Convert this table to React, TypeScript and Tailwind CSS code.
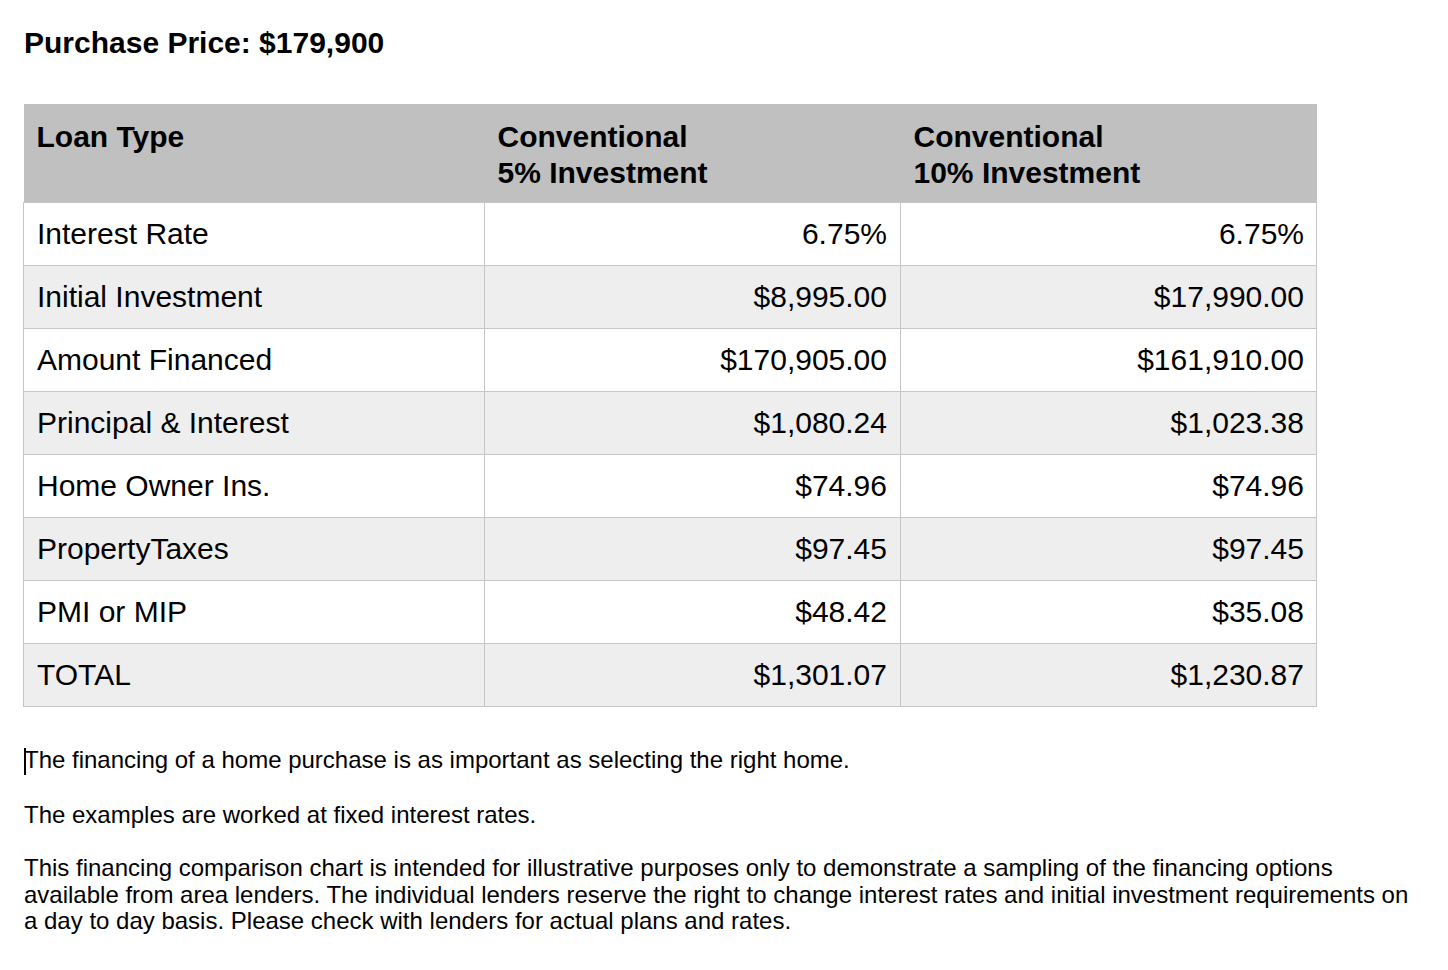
import React from 'react';

type Row = { label: string; five: string; ten: string };

const rows: Row[] = [
  { label: 'Interest Rate', five: '6.75%', ten: '6.75%' },
  { label: 'Initial Investment', five: '$8,995.00', ten: '$17,990.00' },
  { label: 'Amount Financed', five: '$170,905.00', ten: '$161,910.00' },
  { label: 'Principal & Interest', five: '$1,080.24', ten: '$1,023.38' },
  { label: 'Home Owner Ins.', five: '$74.96', ten: '$74.96' },
  { label: 'PropertyTaxes', five: '$97.45', ten: '$97.45' },
  { label: 'PMI or MIP', five: '$48.42', ten: '$35.08' },
  { label: 'TOTAL', five: '$1,301.07', ten: '$1,230.87' },
];

export default function App() {
  return (
    <div className="min-h-screen bg-white text-black font-['Liberation_Sans',Arial,sans-serif] pl-[23px] pr-[24px] pt-[25px]">
      <h1 className="ml-px text-[30px] leading-[36px] font-bold">Purchase Price: $179,900</h1>

      {/* Financing comparison table */}
      <table className="mt-[43px] w-[1293px] border-collapse table-fixed">
        <colgroup>
          <col className="w-[461px]" />
          <col className="w-[416px]" />
          <col className="w-[416px]" />
        </colgroup>
        <thead>
          <tr className="bg-[#bfc0bf] border-b border-[#8e8e8e]">
            <th className="h-[98px] align-top text-left font-bold text-[30px] leading-[36px] pl-[13px] pt-[15px]">
              Loan Type
            </th>
            <th className="align-top text-left font-bold text-[30px] leading-[36px] pl-[13px] pt-[15px]">
              Conventional
              <br />
              5% Investment
            </th>
            <th className="align-top text-left font-bold text-[30px] leading-[36px] pl-[13px] pt-[15px]">
              Conventional
              <br />
              10% Investment
            </th>
          </tr>
        </thead>
        <tbody>
          {rows.map((r, i) => (
            <tr key={r.label} className={i % 2 === 1 ? 'bg-[#eeeeee]' : 'bg-white'}>
              <td className="h-[63px] border border-[#c6c6c6] pl-[13px] pt-[1px] text-[30px] leading-[36px]">{r.label}</td>
              <td className="border border-[#c6c6c6] pr-[13px] pt-[1px] text-right text-[30px] leading-[36px]">{r.five}</td>
              <td className="border border-[#c6c6c6] pr-[12px] pt-[1px] text-right text-[30px] leading-[36px]">{r.ten}</td>
            </tr>
          ))}
        </tbody>
      </table>

      {/* Notes */}
      <div className="mt-[40px] ml-px text-[24px] leading-[26.5px] max-w-[1400px]">
        <p>
          <span className="inline-block w-[2px] h-[27px] bg-black align-[-7px] -mr-[2px]" />
          The financing of a home purchase is as important as selecting the right home.
        </p>
        <p className="mt-[27px]">The examples are worked at fixed interest rates.</p>
        <p className="mt-[27px]">
          This financing comparison chart is intended for illustrative purposes only to demonstrate a sampling of the
          financing options available from area lenders. The individual lenders reserve the right to change interest
          rates and initial investment requirements on a day to day basis. Please check with lenders for actual plans and
          rates.
        </p>
      </div>
    </div>
  );
}
